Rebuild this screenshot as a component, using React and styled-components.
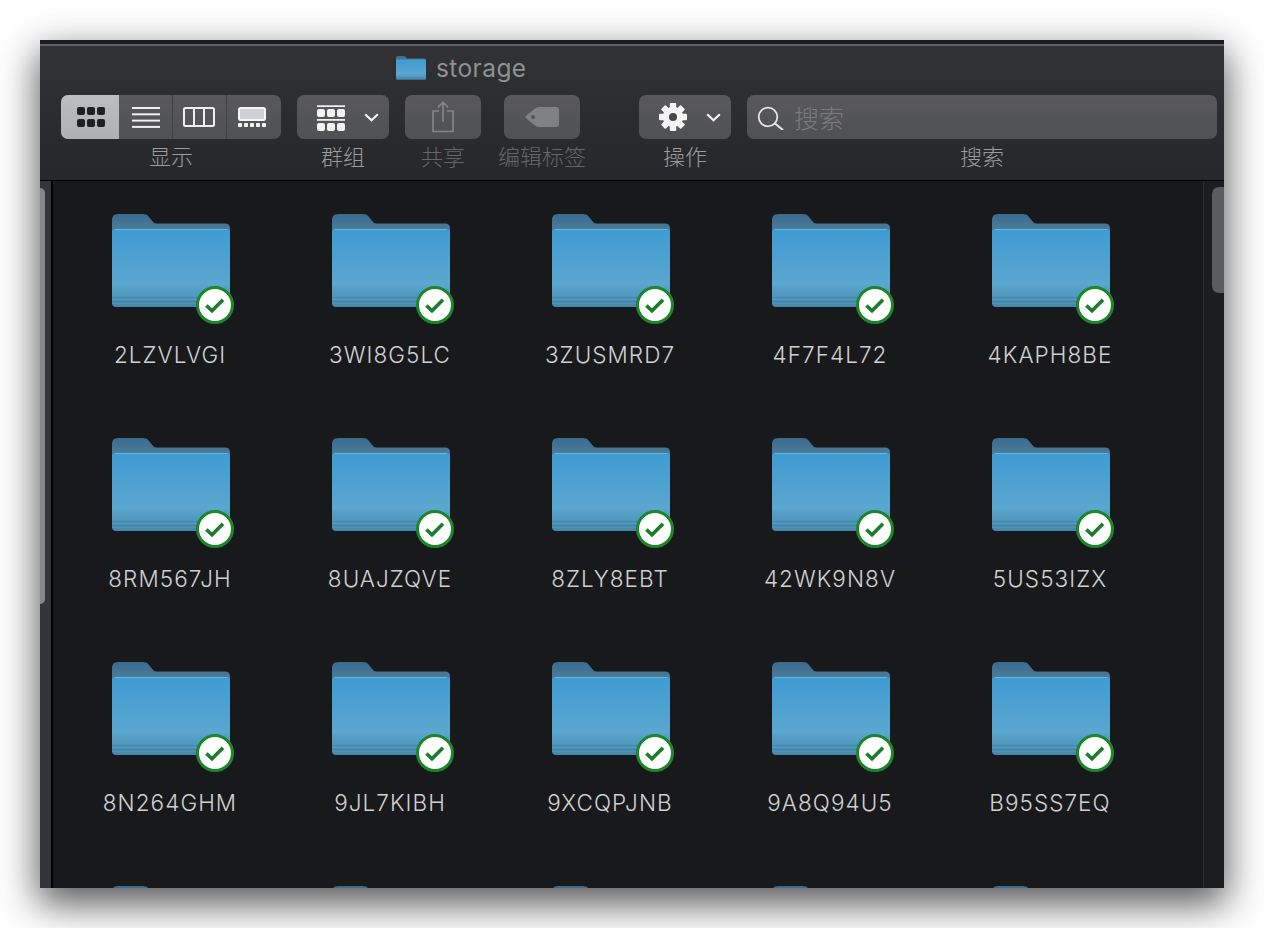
import React from "react";
import styled, { createGlobalStyle } from "styled-components";

const Global = createGlobalStyle`
  html, body { margin: 0; padding: 0; background: #fff; }
  body { width: 1264px; height: 928px; overflow: hidden; font-family: Inter, "Noto Sans CJK SC", sans-serif; }
`;

const Page = styled.div`
  width: 1264px; height: 928px; padding: 40px; box-sizing: border-box; overflow: hidden; background: #fff;
`;
const Window = styled.div`
  width: 1184px; height: 848px; display: flex; flex-direction: column; overflow: hidden;
  background: #18191b;
  box-shadow: 0 14px 36px 2px rgba(0,0,0,.66);
`;
const TopEdge = styled.div`
  height: 4px; flex: none; background: #1c1e22; border-bottom: 2px solid #626366;
`;
const Header = styled.header`
  height: 135px; flex: none; box-sizing: border-box; padding-left: 21px;
  background: linear-gradient(#313234, #26272a);
  border-bottom: 1px solid #000;
`;
const TitleRow = styled.div`
  height: 49px; display: flex; align-items: center; gap: 10px; padding-left: 335px; padding-bottom: 5px; box-sizing: border-box;
`;
const TitleText = styled.span`
  font-size: 24.5px; color: #8f9092; letter-spacing: .4px; line-height: 30px;
`;
const Toolbar = styled.div`
  display: flex; gap: 16px;
`;
const ToolItem = styled.div`
  display: flex; flex-direction: column; align-items: center;
  width: ${p => p.$w}px; margin-left: ${p => p.$ml || 0}px;
`;
const ToolLabel = styled.span`
  margin-top: 3px; font-size: 22px; line-height: 26px; white-space: nowrap;
  font-family: "Noto Sans CJK SC", sans-serif; font-weight: 300;
  color: ${p => (p.$dim ? "#656668" : "#9a9b9d")};
`;
const Btn = styled.div`
  height: 44px; width: ${p => p.$w}px; box-sizing: border-box; border-radius: 7px;
  display: flex; align-items: center; justify-content: ${p => (p.$start ? "flex-start" : "center")};
  padding-left: ${p => (p.$start ? 20 : 0)}px; gap: 19px;
  background: linear-gradient(#59595b, #505153);
`;
const Segments = styled.div`
  height: 44px; width: 220px; display: flex; border-radius: 7px; overflow: hidden;
  background: linear-gradient(#59595b, #505153);
`;
const Segment = styled.div`
  width: ${p => p.$w}px; box-sizing: border-box; display: flex; align-items: center; justify-content: center;
  padding-left: ${p => p.$pl || 0}px; padding-right: ${p => p.$pr || 0}px;
  background: ${p => (p.$active ? "linear-gradient(#bcbdbf, #afb0b2)" : "none")};
  border-left: ${p => (p.$sep ? "1.5px solid #3f4042" : "none")};
`;
const SearchBox = styled.div`
  height: 44px; width: 470px; box-sizing: border-box; padding-left: 10px; border-radius: 7px;
  display: flex; align-items: center; gap: 9px;
  background: linear-gradient(#59595b, #505153);
`;
const SearchHint = styled.span`
  font-size: 25px; line-height: 30px; font-family: "Noto Sans CJK SC", sans-serif; font-weight: 300; color: #7a7b7d;
`;
const Body = styled.div`
  flex: 1; min-height: 0; display: flex;
`;
const LeftRail = styled.div`
  width: 11px; flex: none; box-sizing: border-box; padding-top: 7px; background: #33353a;
`;
const LeftThumb = styled.div`
  width: 5px; height: 416px; background: #85868a; border-radius: 0 5px 5px 0;
`;
const Divider = styled.div`
  width: 2px; flex: none; background: #000;
`;
const Main = styled.main`
  flex: 1; min-width: 0; overflow: hidden; box-sizing: border-box; padding: 33px 0 0 7px;
`;
const Grid = styled.div`
  display: grid; grid-template-columns: repeat(5, 220px); grid-auto-rows: 224px;
`;
const Cell = styled.div`
  display: flex; flex-direction: column; align-items: center;
`;
const FolderBox = styled.div`
  position: relative; width: 118px; height: 94px; margin-left: 2px;
`;
const Badge = styled.div`
  position: absolute; left: 84px; top: 72px; width: 38px; height: 38px; box-sizing: border-box;
  border-radius: 50%; background: #fff; border: 3.5px solid #1d862b;
`;
const Name = styled.span`
  margin-top: 32px; font-size: 22.5px; line-height: 30px; color: #cfd0d2; letter-spacing: 1.05px; font-weight: 300; white-space: nowrap;
`;
const RightRail = styled.div`
  width: 21px; flex: none; box-sizing: border-box; padding: 6px 0 0 8px; background: #1c1d1f; border-left: 1px solid #2c2d2f;
`;
const RightThumb = styled.div`
  height: 106px; background: #5b5c5d; border-radius: 7px 0 0 7px;
`;

const FolderSvg = ({ w = 118, h = 94 }) => (
  <svg width={w} height={h} viewBox="0 0 118 94" style={{ display: "block" }}>
    <defs>
      <linearGradient id="fBack" x1="0" y1="0" x2="0" y2="1">
        <stop offset="0" stopColor="#3a6b8e" />
        <stop offset="1" stopColor="#5d89a3" />
      </linearGradient>
      <linearGradient id="fFront" x1="0" y1="0" x2="0" y2="1">
        <stop offset="0" stopColor="#3e9bd2" />
        <stop offset=".7" stopColor="#5aa7d0" />
        <stop offset=".86" stopColor="#4f97bd" />
        <stop offset="1" stopColor="#4585a9" />
      </linearGradient>
    </defs>
    <path d="M0 6Q0 0 6 0H31Q35 0 37 3L41 8Q42 9.500 45 9.500H113Q118 9.500 118 14V30H0Z" fill="url(#fBack)" />
    <path d="M0 18Q0 15 3 15H115Q118 15 118 18V89Q118 93 114 93H4Q0 93 0 89Z" fill="url(#fFront)" />
    <path d="M3 15.500H115" stroke="#6fb4da" strokeWidth="1" fill="none" />
    <path d="M0 83.500H118M0 87.500H118" stroke="#3e7fa5" strokeWidth="1" opacity=".6" fill="none" />
    <path d="M0 85.500H118M0 89.500H118" stroke="#5d9fc4" strokeWidth="1" opacity=".45" fill="none" />
  </svg>
);

const Check = () => (
  <svg width="31" height="31" viewBox="0 0 31 31" style={{ display: "block" }}>
    <path d="M7.400 16.500L13 21.700L24 10.700" stroke="#1b7d2a" strokeWidth="3.600" fill="none" />
  </svg>
);

const IconGrid = () => (
  <svg width="28" height="20" viewBox="0 0 28 20">
    {[0, 10, 20].flatMap(x => [0, 12].map(y => (
      <rect key={x + "-" + y} x={x} y={y} width="8" height="8" rx="2" fill="#1f2022" />
    )))}
  </svg>
);
const IconList = () => (
  <svg width="28" height="21" viewBox="0 0 28 21">
    {[1, 7.300, 13.600, 19.900].map(y => <rect key={y} x="0" y={y - 1} width="28" height="2" fill="#f0f0f0" />)}
  </svg>
);
const IconColumns = () => (
  <svg width="32" height="20" viewBox="0 0 32 20">
    <rect x="1" y="1" width="30" height="18" rx="1.500" stroke="#f0f0f0" strokeWidth="2" fill="none" />
    <path d="M11 1V19M21 1V19" stroke="#f0f0f0" strokeWidth="2" />
  </svg>
);
const IconGallery = () => (
  <svg width="28" height="20" viewBox="0 0 28 20">
    <rect x="1" y="1" width="26" height="12" rx="1.500" fill="#cfd0d3" stroke="#f4f4f4" strokeWidth="2" />
    {[0, 6, 12, 18, 24].map(x => <rect key={x} x={x} y="16" width="4" height="4" rx=".7" fill="#f0f0f0" />)}
  </svg>
);
const IconGroup = () => (
  <svg width="28" height="28" viewBox="0 0 28 28">
    <rect y="2.300" width="28" height="1.700" fill="#f2f2f2" />
    <rect y="16" width="28" height="1.800" fill="#f2f2f2" />
    {[0, 10, 20].flatMap(x => [6, 20].map(y => (
      <rect key={x + "-" + y} x={x} y={y} width="8" height="8" rx="2" fill="#f2f2f2" />
    )))}
  </svg>
);
const Chevron = () => (
  <svg width="15" height="9" viewBox="0 0 15 9">
    <path d="M1.200 1.200L7.500 7.300L13.800 1.200" stroke="#f2f2f2" strokeWidth="2.200" fill="none" />
  </svg>
);
const IconShare = () => (
  <svg width="22" height="32" viewBox="0 0 22 32">
    <path d="M7 10H1V30.500H21V10H15" stroke="#838486" strokeWidth="1.700" fill="none" />
    <path d="M11 21V1.500M5.800 6.500L11 1.300L16.200 6.500" stroke="#838486" strokeWidth="1.700" fill="none" />
  </svg>
);
const IconTag = () => (
  <svg width="34" height="20" viewBox="0 0 34 20">
    <path fillRule="evenodd" fill="#808183" d="M0 10Q1 8.500 10 1.500Q12 0 14 0H31Q34 0 34 3V17Q34 20 31 20H14Q12 20 10 18.500Q1 11.500 0 10ZM8 8A2 2 0 1 0 8 12A2 2 0 1 0 8 8Z" />
  </svg>
);
const IconGear = () => (
  <svg width="28" height="28" viewBox="0 0 28 28">
    {[0, 45, 90, 135].map(a => (
      <rect key={a} x="10.800" y="0" width="6.400" height="28" rx="1" fill="#f4f4f4" transform={`rotate(${a} 14 14)`} />
    ))}
    <circle cx="14" cy="14" r="7.200" fill="none" stroke="#f4f4f4" strokeWidth="6" />
    <circle cx="14" cy="14" r="4" fill="#47484a" />
  </svg>
);
const IconSearch = () => (
  <svg width="28" height="26" viewBox="0 0 28 26">
    <circle cx="11" cy="13" r="9.300" stroke="#e4e4e4" strokeWidth="1.800" fill="none" />
    <path d="M18 19.500L26 26" stroke="#e4e4e4" strokeWidth="2.200" />
  </svg>
);

const names = [
  "2LZVLVGI", "3WI8G5LC", "3ZUSMRD7", "4F7F4L72", "4KAPH8BE",
  "8RM567JH", "8UAJZQVE", "8ZLY8EBT", "42WK9N8V", "5US53IZX",
  "8N264GHM", "9JL7KIBH", "9XCQPJNB", "9A8Q94U5", "B95SS7EQ",
  "", " ", "  ", "   ", "    ",
];

export default function App() {
  return (
    <Page>
      <Global />
      <Window>
        <TopEdge />
        <Header>
          <TitleRow>
            <FolderSvg w={30} h={24} />
            <TitleText>storage</TitleText>
          </TitleRow>
          <Toolbar>
            <ToolItem $w={220}>
              <Segments>
                <Segment $w={58} $active $pl={2}><IconGrid /></Segment>
                <Segment $w={53}><IconList /></Segment>
                <Segment $w={54} $sep $pr={1}><IconColumns /></Segment>
                <Segment $w={55} $sep $pr={5}><IconGallery /></Segment>
              </Segments>
              <ToolLabel>显示</ToolLabel>
            </ToolItem>
            <ToolItem $w={92}>
              <Btn $w={92} $start><IconGroup /><Chevron /></Btn>
              <ToolLabel>群组</ToolLabel>
            </ToolItem>
            <ToolItem $w={76}>
              <Btn $w={76}><IconShare /></Btn>
              <ToolLabel $dim>共享</ToolLabel>
            </ToolItem>
            <ToolItem $w={88} $ml={1}>
              <Btn $w={76}><IconTag /></Btn>
              <ToolLabel $dim>编辑标签</ToolLabel>
            </ToolItem>
            <ToolItem $w={92} $ml={37}>
              <Btn $w={92} $start><IconGear /><Chevron /></Btn>
              <ToolLabel>操作</ToolLabel>
            </ToolItem>
            <ToolItem $w={470}>
              <SearchBox>
                <IconSearch />
                <SearchHint>搜索</SearchHint>
              </SearchBox>
              <ToolLabel>搜索</ToolLabel>
            </ToolItem>
          </Toolbar>
        </Header>
        <Body>
          <LeftRail><LeftThumb /></LeftRail>
          <Divider />
          <Main>
            <Grid>
              {names.map(n => (
                <Cell key={n}>
                  <FolderBox>
                    <FolderSvg />
                    <Badge><Check /></Badge>
                  </FolderBox>
                  <Name>{n.trim()}</Name>
                </Cell>
              ))}
            </Grid>
          </Main>
          <RightRail><RightThumb /></RightRail>
        </Body>
      </Window>
    </Page>
  );
}
